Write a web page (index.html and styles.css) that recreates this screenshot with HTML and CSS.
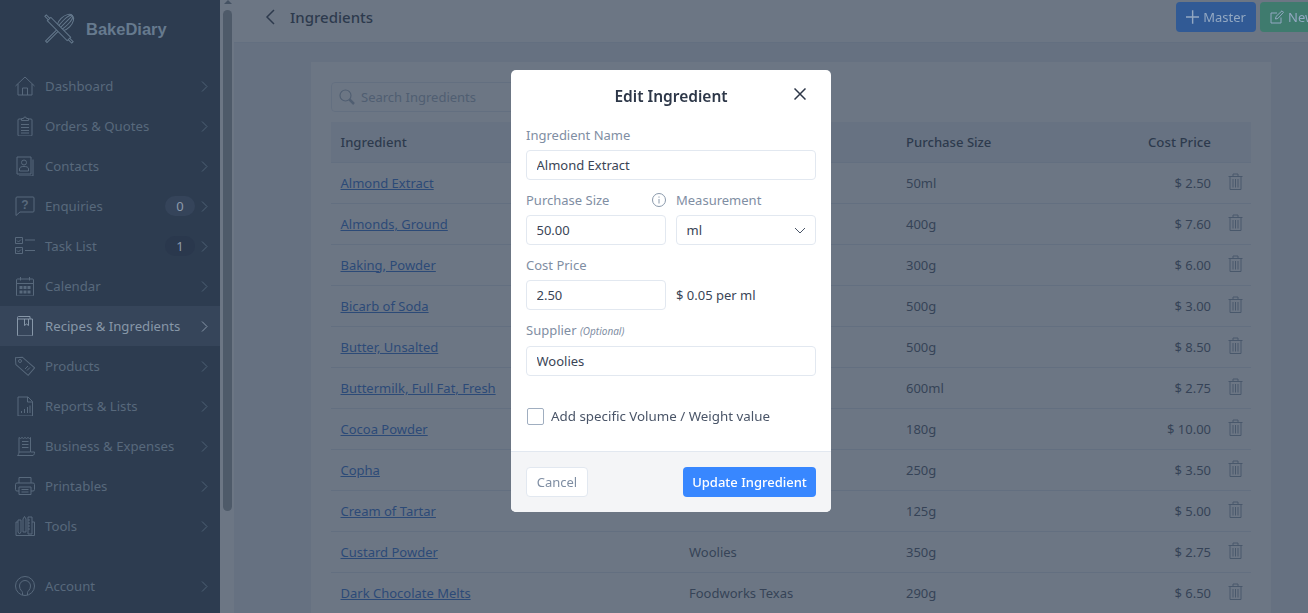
FILE: index.html
```html
<!DOCTYPE html>
<html lang="en">
<head>
    <meta charset="UTF-8">
    <title>Ingredients</title>
    <link rel="stylesheet" href="styles.css">
</head>
<body>
    <div class="app">
        <aside class="sidebar">
            <div class="logo">
                <svg class="logo-icon" viewBox="0 0 30 30">
                    <g transform="rotate(-45 15 15)"><path d="M-3 14h17v2H-3z"/><ellipse cx="24" cy="15" rx="10" ry="6"/><ellipse cx="24" cy="15" rx="10" ry="3"/><path d="M14 15h20"/></g>
                    <g transform="rotate(45 15 15)"><path class="pin" d="M1 12.500h28v5H1z"/><path d="M1 14h-5v2h5M29 14h5v2h-5"/></g>
                </svg>
                <span>BakeDiary</span>
            </div>
            <nav class="nav">
                <a class="nav-item"><svg class="nav-icon" viewBox="0 0 20 20"><path d="M.5 10 10 1l9.500 9M3 8v11h14V8M7.500 19v-7h5v7"/></svg><span class="nav-label">Dashboard</span><svg class="chev" viewBox="0 0 7 11"><path d="M1 .5l5 5-5 5"/></svg></a>
                <a class="nav-item"><svg class="nav-icon" viewBox="0 0 20 20"><path d="M6.500 3H4a1 1 0 0 0-1 1v15a1 1 0 0 0 1 1h12a1 1 0 0 0 1-1V4a1 1 0 0 0-1-1h-2.500M6.500 4.500V2.500H8.500a1.500 1.500 0 0 1 3 0h2v2zM6 8.500h8M6 11.500h8M6 14.500h8M6 17h8"/></svg><span class="nav-label">Orders &amp; Quotes</span><svg class="chev" viewBox="0 0 7 11"><path d="M1 .5l5 5-5 5"/></svg></a>
                <a class="nav-item"><svg class="nav-icon" viewBox="0 0 20 20"><path d="M2 1h14v17H2zM18 3.500V20H4"/><circle cx="9" cy="6.500" r="2.500"/><path d="M4.500 15v-2c0-2 2-2.500 4.500-2.500s4.500.5 4.500 2.500v2z"/></svg><span class="nav-label">Contacts</span><svg class="chev" viewBox="0 0 7 11"><path d="M1 .5l5 5-5 5"/></svg></a>
                <a class="nav-item"><svg class="nav-icon" viewBox="0 0 20 20"><path d="M2 1h16a1 1 0 0 1 1 1v13a1 1 0 0 1-1 1H5l-4 3.500V2a1 1 0 0 1 1-1z"/><text class="icon-q" x="10" y="12.500">?</text></svg><span class="nav-label">Enquiries</span><span class="badge">0</span><svg class="chev" viewBox="0 0 7 11"><path d="M1 .5l5 5-5 5"/></svg></a>
                <a class="nav-item"><svg class="nav-icon" viewBox="0 0 20 20"><path d="M.5 1.500h7v6h-7zM.5 11.500h7v6h-7zM2 4.500l1.500 1.500L6 3.500M2 14.500l1.500 1.500L6 13.500M10 4h10M10 14.500h10"/></svg><span class="nav-label">Task List</span><span class="badge badge-on">1</span><svg class="chev" viewBox="0 0 7 11"><path d="M1 .5l5 5-5 5"/></svg></a>
                <a class="nav-item"><svg class="nav-icon" viewBox="0 0 20 20"><path d="M2.500 3h15a1 1 0 0 1 1 1v15a1 1 0 0 1-1 1h-15a1 1 0 0 1-1-1V4a1 1 0 0 1 1-1zM1.500 7.500h17M5.500 1v3.500M14.500 1v3.500"/><path class="fill" d="M4.500 10h3v3h-3zM8.500 10h3v3h-3zM12.500 10h3v3h-3zM4.500 14.500h3v3h-3zM8.500 14.500h3v3h-3zM12.500 14.500h3v3h-3z"/></svg><span class="nav-label">Calendar</span><svg class="chev" viewBox="0 0 7 11"><path d="M1 .5l5 5-5 5"/></svg></a>
                <a class="nav-item active"><svg class="nav-icon" viewBox="0 0 20 20"><path d="M2.500 2.500V19a1 1 0 0 0 1 1h13a1 1 0 0 0 1-1V3h-15zM2.500 2.500V1.500a1 1 0 0 1 1-1H15V3M9.500 3v6.500l2-1.500 2 1.500V3"/></svg><span class="nav-label">Recipes &amp; Ingredients</span><svg class="chev" viewBox="0 0 7 11"><path d="M1 .5l5 5-5 5"/></svg></a>
                <a class="nav-item"><svg class="nav-icon" viewBox="0 0 20 20"><path d="M1 1h7l11.500 11.500-7 7L1 8z" transform="rotate(-4 10 10)"/><circle cx="5" cy="5" r="1.500"/><path d="M10 13l3-3M12 14.500l3-3"/></svg><span class="nav-label">Products</span><svg class="chev" viewBox="0 0 7 11"><path d="M1 .5l5 5-5 5"/></svg></a>
                <a class="nav-item"><svg class="nav-icon" viewBox="0 0 20 20"><path d="M3 1h10l4.500 4.500V20H3zM12.500 1v5h5M6.500 17v-2M9.500 17v-4M12.500 17v-6M15 17v-7.500"/></svg><span class="nav-label">Reports &amp; Lists</span><svg class="chev" viewBox="0 0 7 11"><path d="M1 .5l5 5-5 5"/></svg></a>
                <a class="nav-item"><svg class="nav-icon" viewBox="0 0 20 20"><path d="M4 1.500l1.500 1 1.500-1 1.500 1 1.500-1 1.500 1 1.500-1 1.500 1 1-1V16H4zM7 5.500h6.500M7 8.500h6.500M7 11.500h6.500M4 16c0 2-1 3-1.500 3.500H18c1-.5 1.500-1.500 1.500-3.500H16"/></svg><span class="nav-label">Business &amp; Expenses</span><svg class="chev" viewBox="0 0 7 11"><path d="M1 .5l5 5-5 5"/></svg></a>
                <a class="nav-item"><svg class="nav-icon" viewBox="0 0 20 20"><path d="M4 7V1.500h12V7M4 15H2a1.500 1.500 0 0 1-1.500-1.500v-5A1.500 1.500 0 0 1 2 7h16a1.500 1.500 0 0 1 1.500 1.500v5A1.500 1.500 0 0 1 18 15h-2M4 11h12v7.500H4zM6.500 13.500h7M6.500 16h7"/></svg><span class="nav-label">Printables</span><svg class="chev" viewBox="0 0 7 11"><path d="M1 .5l5 5-5 5"/></svg></a>
                <a class="nav-item"><svg class="nav-icon" viewBox="0 0 20 20"><path d="M3 6H1v13.500h18.500V6H17M3 4v12l1.500 2L6 16V4zM8 3l1.500-2.500L11 3v13H8zM13 1h4v17h-4zM13 4h2M13 7h2M13 10h2M13 13h2"/></svg><span class="nav-label">Tools</span><svg class="chev" viewBox="0 0 7 11"><path d="M1 .5l5 5-5 5"/></svg></a>
                <a class="nav-item nav-account"><svg class="nav-icon" viewBox="0 0 20 20"><circle cx="10" cy="10" r="9.500"/><path d="M7.500 19v-2.500c0-1.500-3-2.500-3-6.500a5.500 5.500 0 0 1 11 0c0 4-3 5-3 6.500V19"/></svg><span class="nav-label">Account</span><svg class="chev" viewBox="0 0 7 11"><path d="M1 .5l5 5-5 5"/></svg></a>
            </nav>
        </aside>

        <div class="scrollbar">
            <div class="scroll-arrow"></div>
            <div class="scroll-thumb"></div>
        </div>

        <main class="main">
            <header class="topbar">
                <svg class="back" viewBox="0 0 10 16"><path d="M9 1 2 8l7 7"/></svg>
                <h1>Ingredients</h1>
                <div class="top-actions">
                    <button class="btn btn-blue"><svg viewBox="0 0 14 14"><path d="M7 0v14M0 7h14"/></svg>Master</button>
                    <button class="btn btn-green"><svg viewBox="0 0 14 14"><path d="M11 7.500V13H1V3h6M5.500 9l.5-2.500L12 .8 13.500 2.300 7.800 8.500z"/></svg>New</button>
                </div>
            </header>
            <div class="page">
                <section class="card">
                    <div class="search">
                        <svg viewBox="0 0 16 16"><circle cx="6.500" cy="6.500" r="5.500"/><path class="thick" d="M10.500 10.500 15 15"/></svg>
                        <span>Search Ingredients</span>
                    </div>
                    <table class="table">
                        <colgroup><col class="c1"><col class="c2"><col class="c3"><col class="c4"><col class="c5"></colgroup>
                        <thead>
                            <tr><th>Ingredient</th><th>Supplier</th><th>Purchase Size</th><th class="num">Cost Price</th><th></th></tr>
                        </thead>
                        <tbody id="rows"></tbody>
                    </table>
                </section>
            </div>
        </main>
    </div>

    <div class="overlay"></div>

    <div class="modal">
        <div class="modal-head">
            <h2>Edit Ingredient</h2>
            <svg class="close" viewBox="0 0 12 12"><path d="M.5.500l11 11M11.500.500l-11 11"/></svg>
        </div>
        <form class="modal-body">
            <label class="field-label">Ingredient Name</label>
            <input class="input" type="text" value="Almond Extract">
            <div class="two-col">
                <div>
                    <label class="field-label with-info">Purchase Size
                        <svg class="info" viewBox="0 0 14 14"><circle cx="7" cy="7" r="6.500"/><path d="M7 6v4.500M7 3.500v1.200"/></svg>
                    </label>
                    <input class="input" type="text" value="50.00">
                </div>
                <div>
                    <label class="field-label">Measurement</label>
                    <div class="select-wrap">
                        <select class="input"><option>ml</option></select>
                        <svg viewBox="0 0 12 7"><path d="M1 1l5 5 5-5"/></svg>
                    </div>
                </div>
            </div>
            <label class="field-label">Cost Price</label>
            <div class="two-col">
                <input class="input" type="text" value="2.50">
                <span class="per-unit">$ 0.05 per ml</span>
            </div>
            <label class="field-label supplier">Supplier <em>(Optional)</em></label>
            <input class="input" type="text" value="Woolies">
            <label class="check">
                <span class="box"></span>
                Add specific Volume / Weight value
            </label>
        </form>
        <div class="modal-foot">
            <button class="btn-cancel">Cancel</button>
            <button class="btn-update">Update Ingredient</button>
        </div>
    </div>

    <script>
        var rows = [
            ['Almond Extract', '', '50ml', '2.50'],
            ['Almonds, Ground', '', '400g', '7.60'],
            ['Baking, Powder', '', '300g', '6.00'],
            ['Bicarb of Soda', '', '500g', '3.00'],
            ['Butter, Unsalted', '', '500g', '8.50'],
            ['Buttermilk, Full Fat, Fresh', '', '600ml', '2.75'],
            ['Cocoa Powder', '', '180g', '10.00'],
            ['Copha', '', '250g', '3.50'],
            ['Cream of Tartar', '', '125g', '5.00'],
            ['Custard Powder', 'Woolies', '350g', '2.75'],
            ['Dark Chocolate Melts', 'Foodworks Texas', '290g', '6.50']
        ];
        var trash = '<svg class="trash" viewBox="0 0 15 17"><path d="M.5 3.500h14M5 3.500V1h5v2.500M2 3.500v13h11v-13M5 6v8.500M7.500 6v8.500M10 6v8.500"/></svg>';
        document.querySelector('#rows').innerHTML = rows.map(function (r) {
            return '<tr><td><a href="#">' + r[0] + '</a></td><td>' + r[1] + '</td><td>' + r[2] + '</td><td class="num">$ ' + r[3] + '</td><td>' + trash + '</td></tr>';
        }).join('');
    </script>
</body>
</html>
```

FILE: styles.css
```css
* {
    box-sizing: border-box;
}
html, body {
    margin: 0;
    height: 100%;
    overflow: hidden;
}
body {
    font-family: "Noto Sans", "Open Sans", sans-serif;
    font-size: 13px;
    color: #4a5568;
    background: #fff;
}
svg {
    fill: none;
    stroke: currentColor;
    stroke-width: 1;
}
.app {
    display: flex;
    width: 1348px;
    height: 613px;
}

/* sidebar, kept above the overlay with its own dimmed colours */
.sidebar {
    position: relative;
    z-index: 1;
    flex: 0 0 220px;
    background: #2d3c50;
    color: #58697c;
}
.logo {
    display: flex;
    align-items: center;
    height: 66px;
    padding: 0 0 8px 44px;
    color: #667a8e;
    font-family: "Liberation Sans", sans-serif;
    font-weight: 700;
    font-size: 16.5px;
}
.logo-icon {
    width: 30px;
    height: 30px;
    margin-right: 12px;
    overflow: visible;
    stroke: #64788c;
}
.logo-icon .pin {
    fill: #2d3c50;
}
.nav-item {
    display: flex;
    align-items: center;
    height: 40px;
    padding: 0 12px 0 15px;
}
.nav-item.active {
    background: #36455a;
    color: #8797a8;
}
.nav-account {
    margin-top: 20px;
}
.nav-icon {
    flex: 0 0 20px;
    width: 20px;
    height: 20px;
    margin-right: 10px;
}
.nav-icon .fill {
    fill: currentColor;
    stroke: none;
}
.icon-q {
    font: 700 12px "Liberation Sans", sans-serif;
    text-anchor: middle;
    fill: currentColor;
    stroke: none;
}
.nav-label {
    flex: 1;
    font-size: 13.2px;
}
.badge {
    width: 30px;
    height: 20px;
    margin-right: 6px;
    border-radius: 10px;
    background: #35445a;
    color: #8d9aab;
    text-align: center;
    line-height: 20px;
}
.badge-on {
    background: #2a384d;
}
.chev {
    width: 7px;
    height: 11px;
    color: #4f6074;
}
.active .chev {
    color: #8797a8;
}
.scrollbar {
    flex: 0 0 14px;
    padding-left: 3px;
    background: #fff;
}
.scroll-arrow {
    width: 0;
    height: 4px;
    margin-left: 1px;
    border: 4px solid transparent;
    border-top: 0;
    border-bottom-color: #7d8792;
}
.scroll-thumb {
    width: 9px;
    height: 501px;
    margin-top: 6px;
    border-radius: 5px;
    background: #9ba0a4;
}

/* page */
.main {
    flex: 1;
    min-width: 0;
    display: flex;
    flex-direction: column;
    background: #ebeff3;
}
.topbar {
    display: flex;
    align-items: center;
    height: 43px;
    padding: 0 8px 9px 31px;
    background: #fff;
    border-bottom: 1px solid #e2e8f0;
}
.topbar h1 {
    margin: 0 0 0 15px;
    font-size: 15px;
    font-weight: 500;
    color: #2d3748;
}
.back {
    width: 10px;
    height: 16px;
    stroke-width: 1.5;
    color: #2d3748;
}
.top-actions {
    position: relative;
    z-index: 1;
    display: flex;
    gap: 4px;
    margin-left: auto;
}
.btn {
    display: flex;
    align-items: center;
    gap: 4px;
    width: 80px;
    height: 30px;
    padding: 0 10px;
    border: 0;
    border-radius: 4px;
    color: #93a8c2;
    font: inherit;
}
.btn svg {
    width: 14px;
    height: 14px;
    stroke-width: 1.5;
}
.btn-blue {
    background: #315a95;
}
.btn-green {
    background: #3f7b6e;
}
.btn-green svg {
    stroke-width: 1;
}
.page {
    flex: 1;
    padding: 19px 77px 0;
    overflow: hidden;
}
.card {
    padding: 20px;
    background: #fff;
}
.search {
    display: flex;
    align-items: center;
    gap: 6px;
    width: 300px;
    height: 30px;
    padding-left: 7px;
    border: 1px solid #e2e8f0;
    border-radius: 4px;
    color: #a0aec0;
}
.search svg {
    width: 16px;
    height: 16px;
    stroke-width: 1.2;
}
.search .thick {
    stroke-width: 2.5;
}
.table {
    width: 920px;
    margin-top: 10px;
    table-layout: fixed;
    border-collapse: collapse;
}
.c1 { width: 348px; }
.c2 { width: 217px; }
.c3 { width: 200px; }
.c4 { width: 125px; }
.c5 { width: 30px; }
.table th {
    height: 40px;
    padding: 0 10px;
    background: #edf2f7;
    border-bottom: 1px solid #e2e8f0;
    text-align: left;
    font-size: 13.1px;
    font-weight: 500;
    color: #2d3748;
}
.table td {
    height: 41px;
    padding: 0 10px;
    border-bottom: 1px solid #e2e8f0;
}
.table th:first-child, .table td:first-child {
    padding-left: 9.5px;
}
.table .num {
    text-align: right;
}
.table th.num {
    font-size: 13.3px;
}
.table td:last-child {
    padding: 0 0 0 7px;
}
.table a {
    color: #2b6cd4;
}
.trash {
    display: block;
    width: 15px;
    height: 17px;
    margin-top: -3px;
    color: #8a99ab;
}

/* modal */
.overlay {
    position: fixed;
    inset: 0;
    background: rgba(45, 60, 80, .7);
}
.modal {
    position: fixed;
    z-index: 2;
    left: 511px;
    top: 70px;
    width: 320px;
    height: 442px;
    display: flex;
    flex-direction: column;
    border-radius: 5px;
    background: #fff;
    overflow: hidden;
}
.modal-head {
    position: relative;
    height: 55px;
    padding-top: 15px;
    text-align: center;
}
.modal-head h2 {
    margin: 0;
    font-size: 15.500px;
    line-height: 22px;
    font-weight: 600;
    color: #2d3748;
}
.close {
    position: absolute;
    right: 25px;
    top: 18px;
    width: 12px;
    height: 12px;
    stroke-width: 1.5;
    color: #2d3748;
}
.modal-body {
    flex: 1;
    padding: 0 15px;
}
.field-label {
    display: block;
    height: 20px;
    margin-bottom: 5px;
    line-height: 20px;
    color: #7f8ea3;
}
.with-info {
    display: flex;
    align-items: center;
    justify-content: space-between;
}
.info {
    width: 14px;
    height: 14px;
    color: #8a99ab;
}
.input {
    display: block;
    width: 100%;
    height: 30px;
    padding: 0 9.500px;
    border: 1px solid #e2e8f0;
    border-radius: 4px;
    background: #fff;
    color: #3a4556;
    font: inherit;
    appearance: none;
    outline: 0;
}
.two-col {
    display: grid;
    grid-template-columns: 140px 140px;
    gap: 10px;
    align-items: center;
}
.two-col, .modal-body > .two-col + .field-label {
    margin-top: 10px;
}
.field-label + .two-col {
    margin-top: 0;
}
.per-unit {
    color: #3a4556;
}
.field-label.supplier {
    margin-bottom: 6px;
}
.supplier em {
    font-size: 10px;
}
.select-wrap {
    position: relative;
}
.select-wrap svg {
    position: absolute;
    right: 10px;
    top: 12px;
    width: 12px;
    height: 7px;
    color: #4a5568;
}
.check {
    display: flex;
    align-items: center;
    gap: 7px;
    margin-top: 30px;
    height: 20px;
    padding-left: 1px;
    font-size: 13.350px;
    color: #4a5568;
}
.box {
    width: 17px;
    height: 17px;
    border: 1px solid #a0aec0;
    border-radius: 2px;
}
.modal-foot {
    display: flex;
    justify-content: space-between;
    height: 61px;
    padding: 15px;
    border-top: 1px solid #e2e8f0;
    background: #f4f5f7;
}
.btn-cancel, .btn-update {
    height: 30px;
    border-radius: 4px;
    font: inherit;
}
.btn-cancel {
    width: 62px;
    border: 1px solid #e2e8f0;
    background: #fff;
    color: #7f8ea3;
}
.btn-update {
    width: 133px;
    border: 0;
    background: #3887ff;
    color: #fff;
    font-weight: 500;
}
```
